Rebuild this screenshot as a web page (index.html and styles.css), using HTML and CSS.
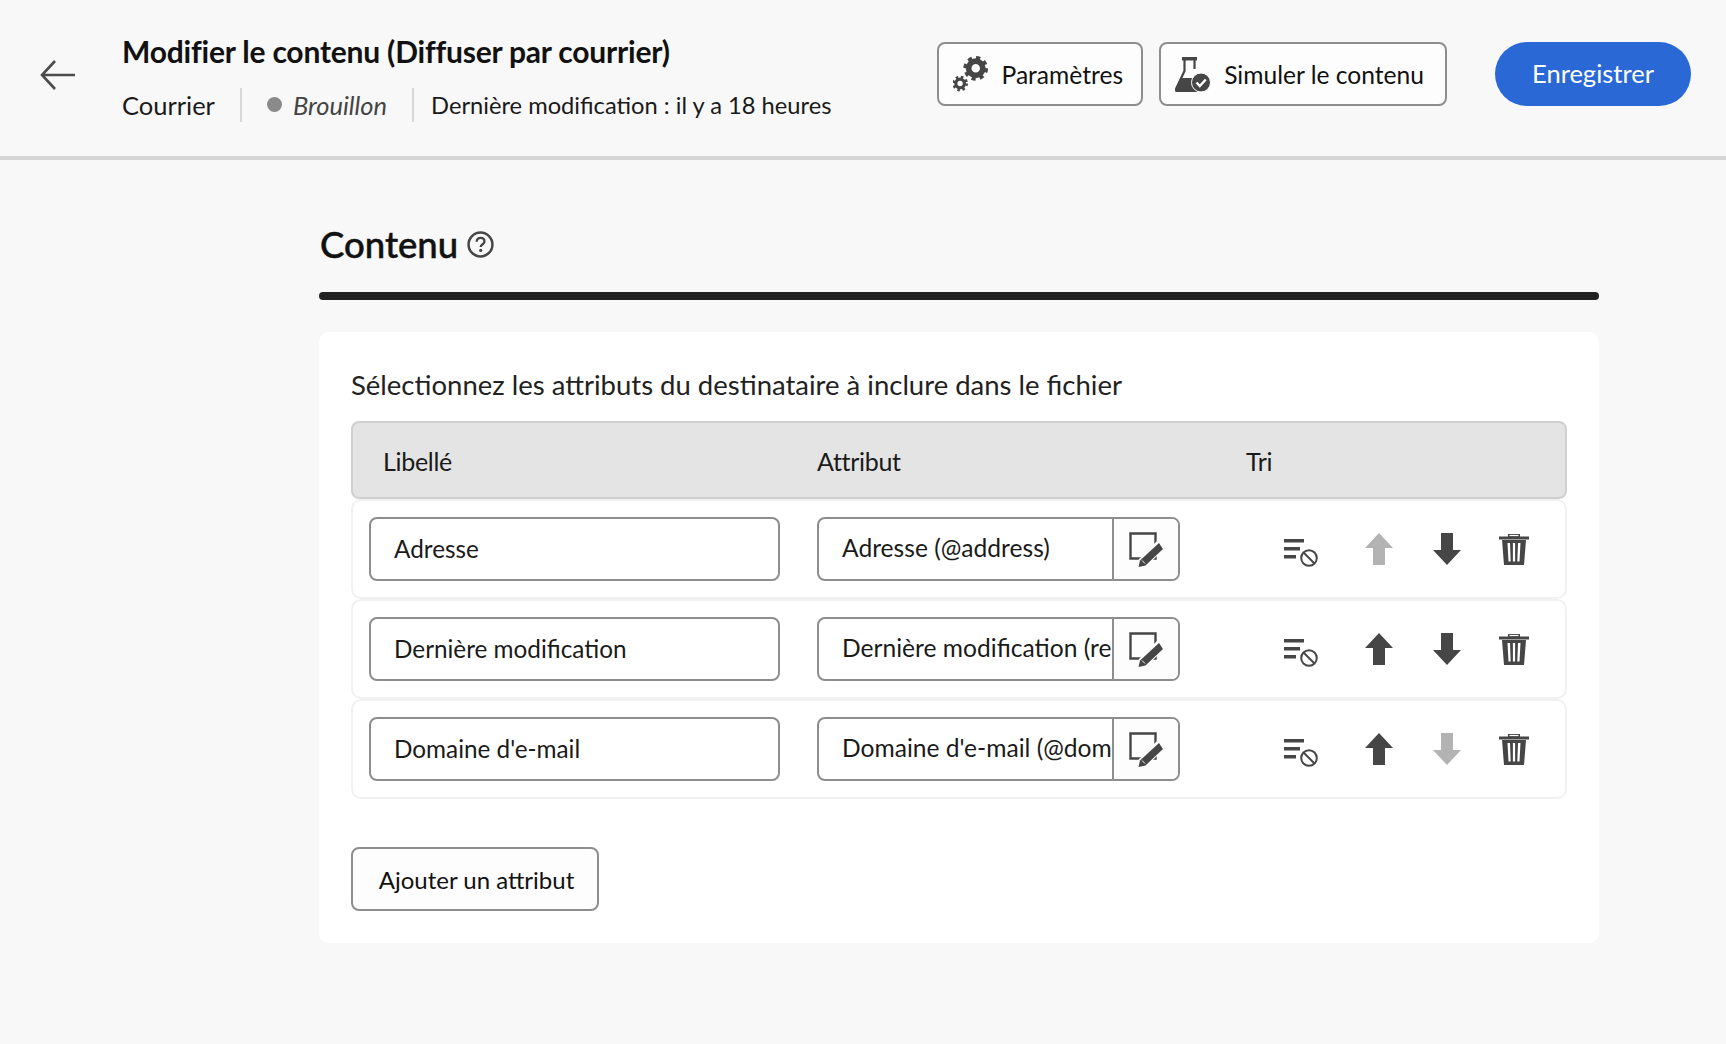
FILE: index.html
```html
<!DOCTYPE html>
<html lang="fr">
<head>
    <meta charset="UTF-8">
    <title>Modifier le contenu</title>
    <link rel="stylesheet" href="styles.css">
</head>
<body>
    <svg class="sprites" width="0" height="0">
        <symbol id="i-edit" viewBox="0 0 34 35">
            <path d="M1.500 1.500h25v25h-25z" fill="none" stroke="#464646" stroke-width="2.400"/>
            <path d="M29 8l6 9-18 18-9 1 2-9z" fill="#fff"/>
            <path d="M30 11l4 6-17.500 16.500-7 1.500 1.500-6.500z" fill="#464646"/>
            <path d="M13 28.500l3 3" stroke="#fff" stroke-width="1"/>
        </symbol>
        <symbol id="i-sort" viewBox="0 0 36 28">
            <path d="M0 0h20v3.600H0zM0 8h16v3.600H0zM0 16h12v3.600H0z" fill="#464646"/>
            <circle cx="25" cy="19" r="7.800" fill="#fff" stroke="#464646" stroke-width="2"/>
            <path d="M19.500 13.500l11 11" stroke="#464646" stroke-width="2"/>
        </symbol>
        <symbol id="i-up" viewBox="0 0 28 32">
            <path d="M14 0l14 15H20v17H8V15H0z"/>
        </symbol>
        <symbol id="i-down" viewBox="0 0 28 32">
            <path d="M14 32L0 17h8V0h12v17h8z"/>
        </symbol>
        <symbol id="i-trash" viewBox="0 0 30 32">
            <path d="M0 3.500h30V6.500H0zM9 3.500V1h12v2.500" fill="#464646"/>
            <path d="M10.500 2.500h9" stroke="#fff" stroke-width="1.200"/>
            <path d="M3 7h24l-2 25H5zM8.500 10l1 18.500h2.200L11 10zM13.900 10v18.500h2.200V10zM19 10l-.700 18.500h2.200l1-18.500z" fill="#464646" fill-rule="evenodd"/>
        </symbol>
    </svg>

    <header class="topbar">
        <button class="back" aria-label="Retour">
            <svg width="36" height="30" viewBox="0 0 36 30"><path d="M35 15H2M15 1L2 15l13 14" fill="none" stroke="#4b4b4b" stroke-width="2.600"/></svg>
        </button>
        <div class="titles">
            <h1>Modifier le contenu (Diffuser par courrier)</h1>
            <div class="meta">
                <span class="meta-item">Courrier</span>
                <span class="meta-item status"><i class="dot"></i><em>Brouillon</em></span>
                <span class="meta-item meta-date">Dernière modification : il y a 18 heures</span>
            </div>
        </div>
        <div class="top-actions">
            <button class="btn btn-icon">
                <svg width="36" height="36" viewBox="0 0 38 38">
                    <g fill="none" stroke="#464646">
                        <circle cx="24" cy="13" r="7.500" stroke-width="6"/>
                        <circle cx="24" cy="13" r="11" stroke-width="4" stroke-dasharray="4.300 4.340"/>
                        <circle cx="7.500" cy="29" r="4.500" stroke-width="3.400"/>
                        <circle cx="7.500" cy="29" r="6.800" stroke-width="3" stroke-dasharray="2.600 2.740"/>
                    </g>
                </svg>
                Paramètres
            </button>
            <button class="btn btn-icon btn-simulate">
                <svg width="36" height="36" viewBox="0 0 36 36">
                    <path d="M7 1h15v3.500H7z" fill="#464646"/>
                    <path d="M9.500 4v11L1 33q-.500 2.500 2 2.500h19" fill="none" stroke="#464646" stroke-width="2.200"/>
                    <path d="M19.500 4v9" fill="none" stroke="#464646" stroke-width="2.200"/>
                    <path d="M5.500 22H20l2 13.500H3q-2.500 0-1.800-2.500z" fill="#464646"/>
                    <circle cx="26" cy="26.500" r="9.500" fill="#464646" stroke="#fff" stroke-width="1"/>
                    <path d="M21.500 26.500l3.300 3.500 6-6.500" fill="none" stroke="#fff" stroke-width="2.400"/>
                </svg>
                Simuler le contenu
            </button>
            <button class="btn-save">Enregistrer</button>
        </div>
    </header>

    <main class="page">
        <div class="section-title">
            <h2>Contenu</h2>
            <svg width="27" height="27" viewBox="0 0 26 26">
                <circle cx="13" cy="13" r="11.500" fill="none" stroke="#464646" stroke-width="2.400"/>
                <path d="M9.300 10.300c0-2.300 1.700-3.600 3.800-3.600s3.700 1.300 3.700 3.300c0 2.800-3.600 2.700-3.600 5.500" fill="none" stroke="#464646" stroke-width="2.200"/>
                <circle cx="13.200" cy="18.700" r="1.500" fill="#464646"/>
            </svg>
        </div>
        <div class="rule"></div>

        <section class="card">
            <p class="intro">Sélectionnez les attributs du destinataire à inclure dans le fichier</p>

            <div class="table-head">
                <span class="col-label">Libellé</span>
                <span class="col-attr">Attribut</span>
                <span>Tri</span>
            </div>

            <div class="row">
                <div class="field field-label">Adresse</div>
                <div class="picker">
                    <div class="field-attr">Adresse (@address)</div>
                    <button class="picker-btn"><svg width="34" height="35"><use href="#i-edit"/></svg></button>
                </div>
                <div class="row-actions">
                    <span class="act act-sort"><svg width="36" height="28"><use href="#i-sort"/></svg></span>
                    <span class="act off"><svg width="28" height="32"><use href="#i-up"/></svg></span>
                    <span class="act"><svg width="28" height="32"><use href="#i-down"/></svg></span>
                    <span class="act"><svg width="30" height="32"><use href="#i-trash"/></svg></span>
                </div>
            </div>

            <div class="row">
                <div class="field field-label">Dernière modification</div>
                <div class="picker">
                    <div class="field-attr">Dernière modification (recipient/@lastModified)</div>
                    <button class="picker-btn"><svg width="34" height="35"><use href="#i-edit"/></svg></button>
                </div>
                <div class="row-actions">
                    <span class="act act-sort"><svg width="36" height="28"><use href="#i-sort"/></svg></span>
                    <span class="act"><svg width="28" height="32"><use href="#i-up"/></svg></span>
                    <span class="act"><svg width="28" height="32"><use href="#i-down"/></svg></span>
                    <span class="act"><svg width="30" height="32"><use href="#i-trash"/></svg></span>
                </div>
            </div>

            <div class="row">
                <div class="field field-label">Domaine d'e-mail</div>
                <div class="picker">
                    <div class="field-attr">Domaine d'e-mail (@domain)</div>
                    <button class="picker-btn"><svg width="34" height="35"><use href="#i-edit"/></svg></button>
                </div>
                <div class="row-actions">
                    <span class="act act-sort"><svg width="36" height="28"><use href="#i-sort"/></svg></span>
                    <span class="act"><svg width="28" height="32"><use href="#i-up"/></svg></span>
                    <span class="act off"><svg width="28" height="32"><use href="#i-down"/></svg></span>
                    <span class="act"><svg width="30" height="32"><use href="#i-trash"/></svg></span>
                </div>
            </div>

            <button class="btn btn-add">Ajouter un attribut</button>
        </section>
    </main>
</body>
</html>
```

FILE: styles.css
```css
* { box-sizing: border-box; }
html, body { margin: 0; }
body { height: 1044px; overflow: hidden; background: #f8f8f8; color: #1a1a1a; font-family: Lato, "Noto Sans", sans-serif; font-size: 24.300px; }
button { font-family: inherit; color: inherit; }
.sprites { position: absolute; }

.topbar { display: flex; align-items: center; height: 160px; padding: 0 35px 4px 40px; border-bottom: 4px solid #d5d5d5; }
.back { display: flex; width: 82px; margin-bottom: 2px; padding: 0; border: 0; background: none; }
.titles { flex: 1; margin-top: 2px; }
h1 { margin: 0 0 19px; font-size: 30px; line-height: 36px; font-weight: 700; color: #111; letter-spacing: -0.2px; }
.meta { display: flex; align-items: center; height: 34px; }
.meta-item { display: flex; align-items: center; height: 34px; font-size: 25.500px; }
.meta-item + .meta-item { border-left: 2px solid #d8d8d8; margin-left: 25px; padding-left: 20px; }
.meta-item.meta-date { padding-left: 17px; font-size: 23.700px; }
.status em { color: #444; }
.dot { width: 15px; height: 15px; margin: 0 11px 0 5px; border-radius: 50%; background: #8a8a8a; }
.top-actions { display: flex; align-items: center; gap: 16px; margin-bottom: 4px; }

.btn { display: flex; align-items: center; height: 64px; border: 2px solid #8e8e8e; border-radius: 8px; background: #fdfdfd; font-size: 24.600px; color: #111; }
.btn-icon { gap: 13px; padding: 0 18px 0 14px; }
.btn-simulate { padding-right: 21px; }
.btn-save { height: 64px; width: 196px; margin-left: 32px; padding: 0 0 3px; border: 0; border-radius: 32px; background: #2a68d6; color: #fff; font-size: 25.500px; }

.page { width: 1280px; margin-left: 319px; }
.section-title { display: flex; align-items: center; gap: 9px; height: 52px; margin-top: 58px; padding-left: 1px; }
h2 { margin: 0; font-size: 36.500px; line-height: 52px; font-weight: 500; color: #111; -webkit-text-stroke: 0.5px #111; }
.rule { height: 8px; margin-top: 22px; border-radius: 4px; background: #222; }

.card { height: 611px; margin-top: 32px; padding: 32px 32px 0; border-radius: 10px; background: #fff; }
.intro { margin: 0 0 16px; font-size: 27.500px; line-height: 41px; color: #222; }
.table-head { display: flex; align-items: center; height: 78px; padding: 2px 0 0 30px; border: 2px solid #d0d0d0; border-radius: 8px; background: #e4e4e4; font-size: 25px; letter-spacing: -0.3px; }
.col-label { width: 434px; }
.col-attr { width: 429px; }

.row { display: flex; align-items: center; height: 100px; padding-left: 16px; border: 2px solid #f1f1f1; border-radius: 10px; }
.field, .picker { height: 64px; border: 2px solid #8e8e8e; border-radius: 8px; }
.field { display: flex; align-items: center; width: 411px; padding: 0 0 2px 23px; }
.picker { display: flex; width: 363px; margin-left: 37px; }
.field-attr { flex: 1; min-width: 0; overflow: hidden; padding-left: 23px; white-space: nowrap; line-height: 58px; font-size: 24.600px; }
.picker-btn { display: flex; align-items: center; justify-content: center; flex: none; width: 66px; padding: 0; border: 0; border-left: 2px solid #8e8e8e; border-radius: 0 6px 6px 0; background: #fdfdfd; }

.row-actions { display: flex; align-items: center; margin-left: 88px; }
.act { display: flex; justify-content: center; width: 67.500px; fill: #464646; }
.act-sort { margin: 8px 10px 0 0; }
.act.off { fill: #b3b3b3; }

.btn-add { justify-content: center; width: 248px; margin-top: 48px; padding: 0 0 0 3px; font-size: 24px; }
```
